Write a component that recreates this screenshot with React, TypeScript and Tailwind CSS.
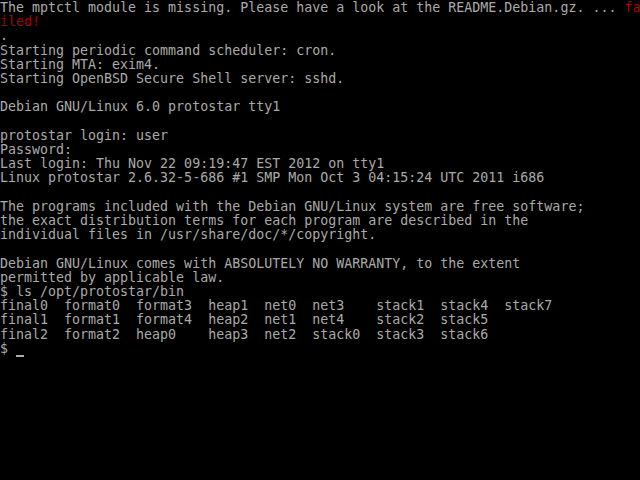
import React from "react";

const lines: string[] = [
  "",
  "",
  ".",
  "Starting periodic command scheduler: cron.",
  "Starting MTA: exim4.",
  "Starting OpenBSD Secure Shell server: sshd.",
  "",
  "Debian GNU/Linux 6.0 protostar tty1",
  "",
  "protostar login: user",
  "Password:",
  "Last login: Thu Nov 22 09:19:47 EST 2012 on tty1",
  "Linux protostar 2.6.32-5-686 #1 SMP Mon Oct 3 04:15:24 UTC 2011 i686",
  "",
  "The programs included with the Debian GNU/Linux system are free software;",
  "the exact distribution terms for each program are described in the",
  "individual files in /usr/share/doc/*/copyright.",
  "",
  "Debian GNU/Linux comes with ABSOLUTELY NO WARRANTY, to the extent",
  "permitted by applicable law.",
  "$ ls /opt/protostar/bin",
  "final0  format0  format3  heap1  net0  net3    stack1  stack4  stack7",
  "final1  format1  format4  heap2  net1  net4    stack2  stack5",
  "final2  format2  heap0    heap3  net2  stack0  stack3  stack6",
];

export default function App() {
  return (
    <div className="w-[640px] h-[480px] bg-black overflow-hidden pt-[1px] text-[#aaaaaa] text-[13.3px] leading-[14.2px] whitespace-pre font-['DejaVu_Sans_Mono',monospace]">
      {lines.map((line, i) => {
        if (i === 0) {
          return (
            <div key={i}>
              The mptctl module is missing. Please have a look at the README.Debian.gz. ...{" "}
              <span className="text-[#aa0000]">fa</span>
            </div>
          );
        }
        if (i === 1) {
          return (
            <div key={i} className="text-[#aa0000]">
              iled!
            </div>
          );
        }
        return <div key={i}>{line || " "}</div>;
      })}
      <div className="flex items-end h-[14.2px]">
        <span>$ </span>
        <span className="inline-block w-[8px] h-[2px] mb-[-1px] bg-[#aaaaaa]" />
      </div>
    </div>
  );
}
